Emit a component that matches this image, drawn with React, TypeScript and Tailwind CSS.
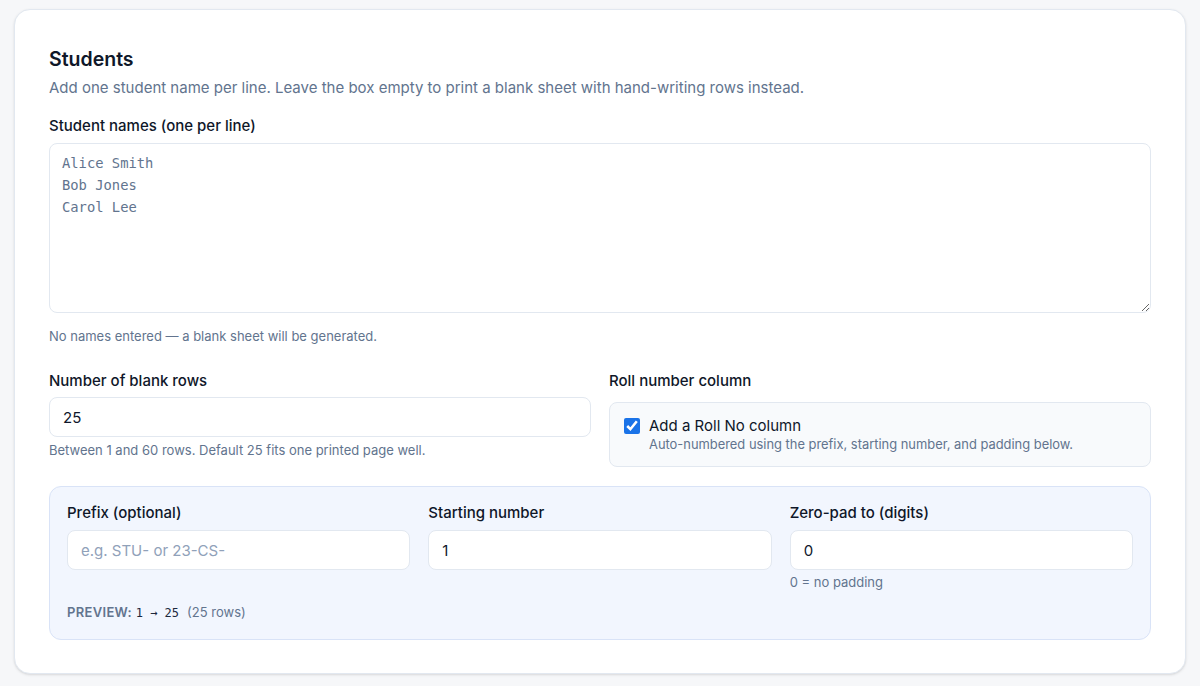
import React, { useState } from "react";

const inputClass =
    "w-full h-10 rounded-lg border border-slate-200 bg-white px-[13px] text-[15px] text-slate-900 placeholder-slate-400 outline-none focus:border-blue-400";

const labelClass = "block text-[15px] leading-5 font-medium text-[#0f1729]";

export default function App() {
    const [names, setNames] = useState("");
    const [rows, setRows] = useState("25");
    const [rollNo, setRollNo] = useState(true);
    const [prefix, setPrefix] = useState("");
    const [start, setStart] = useState("1");
    const [pad, setPad] = useState("0");

    const count = Number(rows) || 25;
    const first = Number(start) || 1;

    return (
        <div className="min-h-screen bg-[#f6f7f9] px-[14px] pt-[9px] pb-[10px] font-['Inter',sans-serif] text-slate-900">
            <div className="rounded-2xl border border-slate-200 bg-white px-[34px] pt-[35px] pb-[33px] shadow-sm">
                <h2 className="text-[19.5px] leading-7 font-semibold text-[#0f1729]">Students</h2>
                <p className="mt-[4px] text-[15px] leading-[22px] text-slate-500">
                    Add one student name per line. Leave the box empty to print a blank sheet with hand-writing rows instead.
                </p>

                <label className={`mt-[17px] ${labelClass}`}>Student names (one per line)</label>
                <textarea
                    value={names}
                    onChange={(e) => setNames(e.target.value)}
                    placeholder={"Alice Smith\nBob Jones\nCarol Lee"}
                    className="mt-[7px] block h-[170px] w-full rounded-lg border border-slate-200 bg-white px-[12px] py-[8px] font-['DejaVu_Sans_Mono',monospace] text-[13.8px] leading-[22px] text-slate-900 placeholder-slate-500 outline-none"
                />
                <p className="mt-[14px] text-[13px] leading-[18px] text-slate-500">
                    No names entered — a blank sheet will be generated.
                </p>

                <div className="mt-[26px] grid grid-cols-2 gap-[18px]">
                    <div>
                        <label className={labelClass}>Number of blank rows</label>
                        <input
                            value={rows}
                            onChange={(e) => setRows(e.target.value)}
                            className={`mt-[6px] ${inputClass}`}
                        />
                        <p className="mt-[4px] text-[13px] leading-[18px] text-slate-500">
                            Between 1 and 60 rows. Default 25 fits one printed page well.
                        </p>
                    </div>
                    <div>
                        <label className={labelClass}>Roll number column</label>
                        <label className="mt-[11px] flex h-[65px] items-start gap-[9px] rounded-lg border border-slate-200 bg-slate-50 px-[14px] pt-[13px]">
                            <input
                                type="checkbox"
                                checked={rollNo}
                                onChange={(e) => setRollNo(e.target.checked)}
                                className="mt-[2px] h-4 w-4 accent-[#1a73e8]"
                            />
                            <span className="flex flex-col">
                                <span className="text-[15px] leading-5 text-[#0f1729]">Add a Roll No column</span>
                                <span className="text-[12.9px] leading-[18px] text-slate-500">
                                    Auto-numbered using the prefix, starting number, and padding below.
                                </span>
                            </span>
                        </label>
                    </div>
                </div>

                <div className="mt-[19px] rounded-xl border border-[#d9e3f7] bg-[#f2f6fe] px-[17px] pt-[16px] pb-[16px]">
                    <div className="grid grid-cols-3 gap-[18px]">
                        <div>
                            <label className={labelClass}>Prefix (optional)</label>
                            <input
                                value={prefix}
                                onChange={(e) => setPrefix(e.target.value)}
                                placeholder="e.g. STU- or 23-CS-"
                                className={`mt-[7px] ${inputClass}`}
                            />
                        </div>
                        <div>
                            <label className={labelClass}>Starting number</label>
                            <input
                                value={start}
                                onChange={(e) => setStart(e.target.value)}
                                className={`mt-[7px] ${inputClass}`}
                            />
                        </div>
                        <div>
                            <label className={labelClass}>Zero-pad to (digits)</label>
                            <input
                                value={pad}
                                onChange={(e) => setPad(e.target.value)}
                                className={`mt-[7px] ${inputClass}`}
                            />
                            <p className="mt-[3px] text-[13px] leading-[18px] text-slate-500">0 = no padding</p>
                        </div>
                    </div>
                    <p className="mt-[11px] text-[13px] leading-5 text-slate-500">
                        <span className="font-semibold tracking-wide uppercase">Preview:</span>{" "}
                        <span className="font-['DejaVu_Sans_Mono',monospace] text-[12px] font-medium text-slate-800">
                            {prefix}{first} → {prefix}{first + count - 1}
                        </span>
                        <span className="ml-2">({count} rows)</span>
                    </p>
                </div>
            </div>
        </div>
    );
}
